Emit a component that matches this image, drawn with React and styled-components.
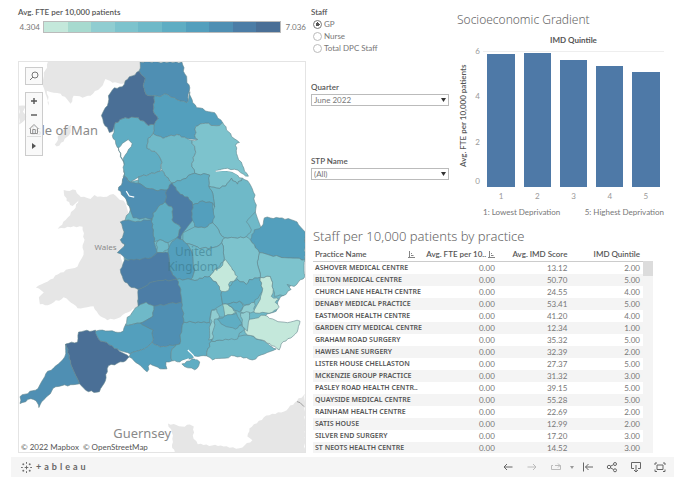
import React, { useState } from "react";
import styled, { createGlobalStyle } from "styled-components";

const GlobalStyle = createGlobalStyle`
  * {
    box-sizing: border-box;
  }

  body {
    margin: 0;
    background: #fff;
    color: #555;
    font-family: Lato, "Noto Sans", sans-serif;
    font-size: 8px;
    line-height: 12px;
  }

  button,
  input,
  select {
    margin: 0;
    font: inherit;
    color: inherit;
  }
`;

const Page = styled.div`
  padding: 0 6px 8px 11px;
`;

const Dashboard = styled.main`
  display: grid;
  grid-template-columns: minmax(0, 288fr) minmax(0, 363fr);
  column-gap: 5px;
  padding: 6px 0 4px 7px;
`;

const Label = styled.div`
  font-weight: 600;
`;

const Legend = styled.section`
  height: 55px;
`;

const LegendRow = styled.div`
  display: grid;
  grid-template-columns: 22px 1fr 22px;
  align-items: center;
  column-gap: 3px;
  margin-top: 3px;
  color: #777;
  text-align: right;
`;

const Ramp = styled.div`
  display: flex;
  height: 12px;
  border: 1px solid #bbb;
`;

const RampStep = styled.span`
  flex: 1;
  background: ${(props) => props.$color};
`;

const MapFrame = styled.section`
  position: relative;
  border: 1px solid #e4e4e4;

  > svg {
    display: block;
    width: 100%;
    height: auto;
    font-family: "Noto Sans", sans-serif;
  }
`;

const MapTools = styled.div`
  position: absolute;
  top: 5px;
  left: 6px;
  display: flex;
  flex-direction: column;
  gap: 7px;
`;

const ToolGroup = styled.div`
  display: flex;
  flex-direction: column;
  padding: 1px;
  border: 1px solid #ccc;
  background: rgba(248, 248, 248, 0.85);
`;

const ToolButton = styled.button`
  display: grid;
  place-items: center;
  width: 14px;
  height: ${(props) => (props.$tall ? "18px" : "14px")};
  padding: 0;
  border: 0;
  border-top: ${(props) => (props.$tall ? "1px solid #ddd" : "0")};
  background: none;
`;

const Attribution = styled.div`
  position: absolute;
  bottom: 0;
  left: 2px;
  display: flex;
  gap: 4px;
  line-height: 10px;

  a {
    color: #555;
    text-decoration: none;
  }
`;

const RightSide = styled.div`
  display: flex;
  flex-direction: column;
`;

const TopRow = styled.div`
  display: grid;
  grid-template-columns: minmax(0, 138fr) minmax(0, 218fr);
  column-gap: 7px;
  height: 222px;
`;

const Filters = styled.section`
  display: flex;
  flex-direction: column;
`;

const StaffFilter = styled.fieldset`
  height: 75px;
  margin: 0;
  padding: 0;
  border: 0;

  legend {
    padding: 0;
    font-weight: 600;
  }
`;

const Radio = styled.label`
  display: flex;
  align-items: center;
  gap: 2px;
  padding-left: 2px;
  color: #777;

  input {
    appearance: none;
    width: 9px;
    height: 9px;
    border: 1px solid #bbb;
    border-radius: 50%;
    background: #fff;
  }

  input:checked {
    border-color: #777;
    background: radial-gradient(circle, #555 0 2px, #fff 2px);
  }
`;

const SelectFilter = styled.div`
  display: flex;
  flex-direction: column;
  height: 74px;

  label {
    font-weight: 600;
  }
`;

const SelectBox = styled.div`
  position: relative;
  margin-top: 1px;

  select {
    display: block;
    appearance: none;
    width: 100%;
    height: 12px;
    padding: 0 12px 0 2px;
    border: 1px solid #bbb;
    border-radius: 0;
    background: #fff;
    color: #777;
    line-height: 10px;
  }

  svg {
    position: absolute;
    top: 4px;
    right: 3px;
    pointer-events: none;
  }
`;

const Title = styled.h2`
  margin: 0;
  color: #666;
  font-family: "Noto Sans", sans-serif;
  font-size: ${(props) => (props.$large ? "13px" : "12px")};
  font-weight: 300;
  line-height: 16px;
`;

const Gradient = styled.section`
  display: flex;
  flex-direction: column;
  padding: 6px 10px 0 1px;
`;

const ChartGrid = styled.div`
  display: grid;
  grid-template-columns: 12px 8px 1fr;
  column-gap: 3px;
`;

const ChartHeader = styled.div`
  grid-column: 3;
  height: 17px;
  padding-top: 6px;
  font-weight: 700;
  text-align: center;
`;

const AxisTitle = styled.div`
  grid-column: 1;
  writing-mode: vertical-rl;
  transform: rotate(180deg);
  font-weight: 600;
  text-align: center;
`;

const AxisY = styled.div`
  display: grid;
  grid-template-rows: repeat(3, 1fr) 6px;
  color: #999;
  text-align: right;

  span:last-child {
    align-self: end;
  }
`;

const Plot = styled.div`
  display: grid;
  grid-template-columns: repeat(5, 1fr);
  align-items: end;
  justify-items: center;
  height: 136px;
  margin-top: 6px;
  border-top: 1px solid #eee;
`;

const Bar = styled.div`
  width: 76%;
  background: #4e79a7;
`;

const AxisX = styled.div`
  grid-column: 3;
  display: grid;
  grid-template-columns: repeat(5, 1fr);
  padding-top: 3px;
  color: #999;
  text-align: center;
`;

const Notes = styled.div`
  display: flex;
  justify-content: space-between;
  padding: 4px 0 0 26px;
  color: #777;
`;

const Practices = styled.section`
  padding: 0 21px 0 2px;
`;

const TableWrap = styled.div`
  display: flex;
  height: 205px;
  margin-top: 4px;
  overflow: hidden;
`;

const Table = styled.table`
  flex: 1;
  width: 100%;
  height: 205px;
  table-layout: fixed;
  border-collapse: collapse;

  th,
  td {
    height: 12px;
    padding: 0 3px 0 0;
    text-align: right;
    white-space: nowrap;
    font-weight: 400;
  }

  th:first-child {
    padding: 0 0 0 2px;
    text-align: left;
  }

  tbody th {
    font-family: "Noto Sans", sans-serif;
    font-size: 7px;
    font-weight: 600;
  }

  thead th {
    height: 13px;
    border-bottom: 1px solid #ccc;
    font-weight: 600;
  }

  td {
    color: #777;
  }

  tbody tr:nth-child(even) {
    background: #f4f4f4;
  }
`;

const SortHead = styled.div`
  display: flex;
  align-items: center;
  justify-content: space-between;
  padding-left: ${(props) => (props.$indent ? "11px" : "0")};
`;

const ScrollTrack = styled.div`
  flex: none;
  width: 10px;
  margin-top: 13px;
  background: #f4f4f4;
`;

const ScrollThumb = styled.div`
  height: 15px;
  background: #dcdcdc;
`;

const Toolbar = styled.footer`
  display: flex;
  align-items: center;
  justify-content: space-between;
  height: 20px;
  padding: 0 2px 0 10px;
  background: #f5f5f5;
`;

const Logo = styled.a`
  display: flex;
  align-items: center;
  gap: 4px;
  color: #666;
  text-decoration: none;
`;

const Wordmark = styled.span`
  display: flex;
  gap: 3px;
  font-size: 9px;
  font-weight: 700;
`;

const Actions = styled.div`
  display: flex;
`;

const Action = styled.button`
  display: grid;
  place-items: center;
  width: ${(props) => (props.$narrow ? "8px" : "24px")};
  height: 20px;
  padding: 0;
  border: 0;
  background: none;
  color: ${(props) => (props.disabled ? "#bbb" : "#666")};
`;

const ramp = [
  "#c4e8db",
  "#a7dacf",
  "#90cdd1",
  "#7dc3cd",
  "#6fb9c8",
  "#5fadc3",
  "#539fbd",
  "#4f8fb3",
  "#4c7da6",
  "#4a6f96",
];

// land without data
const land = [
  "47,61 43,75 42,85 48,105 46,90 53,92 60,93 66,98 70,103 73,95 82,97 90,95 100,87 105,78 112,82 123,83 139,70 141,61",
  "54,144 59,134 65,128 71,124 70,132 63,141 56,146",
  "18,105 25,105 22,111 26,116 18,124",
  "63,190 75,190 81,198 72,206 66,201",
  "80,197 90,199 94,195 103,197 113,194 125,203 130,217 134,220 124,232 125,245 120,250 122,262 123,280 138,290 138,307 128,313 120,318 107,321 98,315 93,307 77,309 73,305 63,298 53,303 47,306 39,305 38,298 43,293 35,288 47,282 60,273 77,267 83,255 82,248 84,240 82,227 67,227 57,229 65,220 73,210",
  "306,395 298,402 285,413 267,417 250,430 248,438 253,442 240,450 227,448 198,446 193,437 194,428 190,426 182,428 168,425 173,437 172,447 175,454 306,454",
];

// care systems: shade in the ramp, outline
const regions = [
  [4, "118,147 124,165 124,182 138,180 152,190 172,183 196,165 240,178 256,212 262,230 280,230 306,240 302,275 280,300 277,312 262,318 262,342 240,350 215,350 190,350 160,345 135,325 140,290 125,270 124,222 130,210 122,190 125,165"],
  [7, "140,61 182,61 185,73 190,87 188,97 187,102 177,99 165,93 160,96 154,95 146,94 143,85 145,77 139,70"],
  [6, "154,95 160,96 165,93 177,99 187,102 190,91 193,102 197,107 215,112 223,122 220,125 203,123 196,126 195,135 198,139 187,138 177,134 163,138 153,133 154,124 158,118 153,110"],
  [5, "115,122 125,117 138,117 148,125 154,124 153,133 148,138 147,148 157,153 162,162 160,171 138,177 130,182 124,176 123,158 127,152 132,143 128,139 122,143 119,147 117,147 115,140 112,135"],
  [9, "139,70 125,80 122,86 114,87 108,95 107,105 101,115 103,122 107,127 109,132 112,131 115,122 125,117 138,117 148,125 154,124 158,118 153,110 154,95 146,94 143,85 145,77"],
  [4, "153,133 163,138 177,134 187,138 192,140 196,152 192,163 195,173 183,179 172,183 162,170 162,162 157,153 147,148 148,138"],
  [3, "196,126 203,123 220,125 223,122 232,136 240,142 236,145 237,153 243,165 249,176 244,174 235,169 228,168 216,171 229,171 243,178 238,184 232,178 226,186 217,188 209,186 210,175 195,173 192,163 196,152 192,140 198,139 195,135"],
  [4, "209,186 217,188 226,186 232,178 238,184 243,178 250,183 254,192 257,205 256,212 247,222 252,230 247,237 235,238 225,238 220,233 213,223 215,207 213,193"],
  [5, "172,183 183,179 195,173 210,175 209,186 213,193 215,207 213,203 203,201 193,205 188,197 180,194"],
  [5, "138,177 160,171 162,170 172,183 167,190 155,190 146,188 138,183"],
  [7, "124,176 130,182 138,183 146,188 155,190 167,190 165,202 160,205 153,213 152,219 133,218 130,208 125,198 118,190 122,182"],
  [8, "167,190 172,183 180,194 188,197 193,205 192,217 193,220 183,233 181,240 177,238 181,228 172,220 173,209 165,202"],
  [6, "193,205 203,201 213,203 215,217 213,223 205,228 195,227 192,217"],
  [5, "152,219 153,213 160,205 165,202 173,209 172,220 181,228 177,238 168,243 160,240 154,242 153,233"],
  [7, "120,222 128,220 135,222 152,219 153,233 154,242 157,253 148,259 127,260 117,253 120,250 125,245 120,240 124,232"],
  [4, "157,242 160,240 168,243 169,248 163,253 157,253"],
  [6, "168,253 169,248 172,242 177,238 183,240 187,244 193,256 195,270 191,280 177,280 170,270"],
  [8, "125,260 148,259 157,253 163,253 168,253 170,270 177,280 160,281 150,283 147,286 138,290 131,288 123,280 120,270"],
  [8, "138,290 147,286 150,283 160,281 177,280 181,290 182,303 170,304 154,307 146,303 138,307"],
  [4, "138,307 146,303 154,307 153,317 140,324 125,326 127,318"],
  [7, "154,307 170,304 182,303 184,323 182,330 180,345 176,346 160,348 152,343 153,331 140,324 153,317"],
  [6, "93,333 102,331 115,333 123,332 125,326 140,324 153,331 152,343 147,348 130,355 117,350 98,340"],
  [7, "65,345 70,362 79,385 70,386 55,388 47,397 43,401 38,409 35,402 30,400 19,405 19,398 37,390 45,375 55,367 64,358"],
  [9, "65,345 77,343 78,333 95,331 98,340 117,350 129,358 123,363 108,367 105,382 99,393 88,393 79,385 70,362"],
  [6, "129,358 130,355 147,348 152,343 160,348 176,346 172,350 172,362 166,363 167,370 160,370 150,365 147,373 138,365"],
  [5, "184,323 210,323 212,342 208,350 207,357 195,357 190,360 180,363 172,362 172,350 176,346 180,345 182,330"],
  [5, "182,365 192,360 200,363 199,367 195,371 188,369"],
  [4, "212,342 220,341 235,339 248,336 262,341 277,350 265,355 253,361 235,357 213,361 207,357 208,350"],
  [4, "215,318 224,318 235,325 243,327 245,330 240,334 238,340 220,341 212,342 213,330"],
  [0, "248,325 245,330 248,336 263,341 280,351 282,345 294,337 299,330 301,322 298,321 285,323 276,321 265,316 250,320"],
  [6, "251,240 255,230 262,227 265,218 283,218 298,222 306,232 306,260 280,257 260,253"],
  [3, "260,253 280,257 306,260 306,277 295,287 288,285 292,290 287,295 275,297 274,290 271,277 261,278 258,262"],
  [3, "225,238 235,238 247,237 251,240 260,253 258,262 261,278 250,280 247,285 238,280 233,270 224,262 224,250 222,243"],
  [4, "183,233 195,227 205,228 213,223 220,233 225,238 222,243 217,247 200,249 187,244 183,240"],
  [4, "187,244 200,249 217,247 222,243 224,250 224,262 215,270 210,277 205,277 195,281 191,280 195,270 193,256"],
  [5, "177,280 191,280 195,281 205,277 210,277 218,285 222,292 223,305 212,311 210,323 184,323 182,303 181,290"],
  [5, "229,287 238,280 247,285 250,280 261,278 263,292 255,303 245,306 240,302 228,305 223,305 222,292"],
  [0, "226,260 232,268 238,277 229,285 229,291 222,292 218,285 210,277 215,270 221,268"],
  [0, "253,312 261,300 263,292 261,278 271,277 274,290 272,297 280,300 276,303 280,308 273,313 260,314"],
  [2, "212,311 217,310 220,318 215,320 213,340 209,341 211,325"],
  [1, "223,305 228,305 237,313 232,316 225,317"],
  [5, "228,305 240,302 244,307 240,313 235,311"],
  [2, "244,307 255,303 255,312 248,314 241,313"],
  [5, "218,320 225,317 237,314 243,325 236,330 224,326"],
  [2, "241,314 250,313 250,320 248,332 243,327"],
];

// breaks each edge into short jogs; an edge gives the same jogs in both directions
function roughen(points) {
  const nodes = points.split(" ").map((p) => p.split(",").map(Number));
  const out = [];
  nodes.forEach((from, i) => {
    const to = nodes[(i + 1) % nodes.length];
    const flip = from[0] > to[0] || (from[0] === to[0] && from[1] > to[1]);
    const [a, b] = flip ? [to, from] : [from, to];
    const dx = b[0] - a[0];
    const dy = b[1] - a[1];
    const length = Math.hypot(dx, dy);
    const steps = length > 60 ? 1 : Math.max(1, Math.round(length / 3));
    const line = [a];
    for (let k = 1; k < steps; k++) {
      const seed = Math.sin(a[0] * 12.9 + a[1] * 78.2 + k * 37.7) * 43758;
      const shift = (seed - Math.floor(seed) - 0.5) * 2;
      line.push([
        a[0] + (dx * k) / steps - (dy / length) * shift,
        a[1] + (dy * k) / steps + (dx / length) * shift,
      ]);
    }
    line.push(b);
    if (flip) line.reverse();
    out.push(...line.slice(0, -1));
  });
  return out.map(([x, y]) => `${x.toFixed(1)},${y.toFixed(1)}`).join(" ");
}

const bars = [
  { quintile: 1, value: 5.92 },
  { quintile: 2, value: 5.95 },
  { quintile: 3, value: 5.66 },
  { quintile: 4, value: 5.37 },
  { quintile: 5, value: 5.1 },
];

const practices = [
  ["ASHOVER MEDICAL CENTRE", "13.12", "2.00"],
  ["BILTON MEDICAL CENTRE", "50.70", "5.00"],
  ["CHURCH LANE HEALTH CENTRE", "24.55", "4.00"],
  ["DENABY MEDICAL PRACTICE", "53.41", "5.00"],
  ["EASTMOOR HEALTH CENTRE", "41.20", "4.00"],
  ["GARDEN CITY MEDICAL CENTRE", "12.34", "1.00"],
  ["GRAHAM ROAD SURGERY", "35.32", "5.00"],
  ["HAWES LANE SURGERY", "32.39", "2.00"],
  ["LISTER HOUSE CHELLASTON", "27.37", "5.00"],
  ["MCKENZIE GROUP PRACTICE", "31.32", "3.00"],
  ["PASLEY ROAD HEALTH CENTR..", "39.15", "5.00"],
  ["QUAYSIDE MEDICAL CENTRE", "55.28", "5.00"],
  ["RAINHAM HEALTH CENTRE", "22.69", "2.00"],
  ["SATIS HOUSE", "12.99", "2.00"],
  ["SILVER END SURGERY", "17.20", "3.00"],
  ["ST NEOTS HEALTH CENTRE", "14.52", "3.00"],
];

function Icon({ size = 12, children }) {
  return (
    <svg
      width={size}
      height={size}
      viewBox="0 0 12 12"
      fill="none"
      stroke="currentColor"
      aria-hidden="true"
    >
      {children}
    </svg>
  );
}

function SortIcon() {
  return (
    <svg
      width="7"
      height="7"
      viewBox="0 0 7 7"
      fill="none"
      stroke="#777"
      strokeWidth="0.9"
    >
      <path d="M1.5 0v6M3 2.5h1M3 4.5h2.5M0 6.5h7" />
    </svg>
  );
}

function EnglandMap() {
  return (
    <svg viewBox="18 61 288 393" role="img" aria-label="Map of England">
      <g fill="#e6e6e6">
        {land.map((points) => (
          <polygon key={points} points={roughen(points)} />
        ))}
      </g>
      <g stroke="#64858c" strokeWidth="0.6" strokeLinejoin="round">
        {regions.map(([shade, points]) => (
          <polygon key={points} points={roughen(points)} fill={ramp[shade]} />
        ))}
      </g>
      <g fill="none" stroke="#fff" strokeWidth="1.2">
        <path d="M216 171l9-1 8 1 5 3 5 2M126 191l3 5 5 1M188 351l5 5 3 4 7-2M181 363l8-3" />
      </g>
      <path d="M298 403l3 1 4 4" fill="none" stroke="#888" strokeWidth="0.8" />
      <g fill="#8a8a8a">
        <text x="30" y="135" fontSize="13">
          Isle of Man
        </text>
        <text x="94" y="250" fontSize="8">
          Wales
        </text>
        <text x="113" y="440" fontSize="13">
          Guernsey
        </text>
      </g>
      <g fill="#34707f" fillOpacity="0.5" fontSize="12" textAnchor="middle">
        <text x="194" y="256">
          United
        </text>
        <text x="193" y="271">
          Kingdom
        </text>
      </g>
    </svg>
  );
}

function SelectField({ id, label, value }) {
  return (
    <SelectFilter>
      <label htmlFor={id}>{label}</label>
      <SelectBox>
        <select id={id} defaultValue={value}>
          <option>{value}</option>
        </select>
        <svg width="5" height="4" viewBox="0 0 5 4" fill="#333">
          <path d="M0 0h5L2.5 4z" />
        </svg>
      </SelectBox>
    </SelectFilter>
  );
}

function App() {
  const [staff, setStaff] = useState("GP");

  return (
    <Page>
      <GlobalStyle />
      <Dashboard>
        <div>
          <Legend>
            <Label>Avg. FTE per 10,000 patients</Label>
            <LegendRow>
              <span>4.304</span>
              <Ramp>
                {ramp.map((color) => (
                  <RampStep key={color} $color={color} />
                ))}
              </Ramp>
              <span>7.036</span>
            </LegendRow>
          </Legend>
          <MapFrame>
            <EnglandMap />
            <MapTools>
              <ToolGroup>
                <ToolButton aria-label="Search">
                  <Icon>
                    <circle cx="7" cy="5" r="3" stroke="#777" />
                    <path d="M5 7L2 10" stroke="#777" />
                  </Icon>
                </ToolButton>
              </ToolGroup>
              <ToolGroup>
                <ToolButton aria-label="Zoom in">
                  <Icon>
                    <path d="M3 6h6M6 3v6" strokeWidth="1.4" />
                  </Icon>
                </ToolButton>
                <ToolButton aria-label="Zoom out">
                  <Icon>
                    <path d="M3 6h6" strokeWidth="1.4" />
                  </Icon>
                </ToolButton>
                <ToolButton aria-label="Reset view">
                  <Icon>
                    <path
                      d="M1.5 6L6 1.5 10.5 6M2.5 5.5v5h7v-5M4.7 10.5V6.5h2.6v4"
                      stroke="#888"
                      strokeWidth="0.9"
                    />
                  </Icon>
                </ToolButton>
                <ToolButton $tall aria-label="More tools">
                  <Icon>
                    <path d="M4 3v6l4-3z" fill="#555" stroke="none" />
                  </Icon>
                </ToolButton>
              </ToolGroup>
            </MapTools>
            <Attribution>
              <a href="#mapbox">© 2022 Mapbox</a>
              <a href="#openstreetmap">© OpenStreetMap</a>
            </Attribution>
          </MapFrame>
        </div>

        <RightSide>
          <TopRow>
            <Filters>
              <StaffFilter>
                <legend>Staff</legend>
                {["GP", "Nurse", "Total DPC Staff"].map((name) => (
                  <Radio key={name}>
                    <input
                      type="radio"
                      name="staff"
                      checked={staff === name}
                      onChange={() => setStaff(name)}
                    />
                    {name}
                  </Radio>
                ))}
              </StaffFilter>
              <SelectField id="quarter" label="Quarter" value="June 2022" />
              <SelectField id="stp" label="STP Name" value="(All)" />
            </Filters>

            <Gradient>
              <Title>Socioeconomic Gradient</Title>
              <ChartGrid>
                <ChartHeader>IMD Quintile</ChartHeader>
                <AxisTitle>Avg. FTE per 10,000 patients</AxisTitle>
                <AxisY>
                  <span>6</span>
                  <span>4</span>
                  <span>2</span>
                  <span>0</span>
                </AxisY>
                <Plot>
                  {bars.map((bar) => (
                    <Bar
                      key={bar.quintile}
                      style={{ height: `${(bar.value / 6) * 100}%` }}
                    />
                  ))}
                </Plot>
                <AxisX>
                  {bars.map((bar) => (
                    <span key={bar.quintile}>{bar.quintile}</span>
                  ))}
                </AxisX>
              </ChartGrid>
              <Notes>
                <span>1: Lowest Deprivation</span>
                <span>5: Highest Deprivation</span>
              </Notes>
            </Gradient>
          </TopRow>

          <Practices>
            <Title $large>Staff per 10,000 patients by practice</Title>
            <TableWrap>
              <Table>
                <colgroup>
                  <col width="31%" />
                  <col width="25%" />
                  <col width="22%" />
                  <col width="22%" />
                </colgroup>
                <thead>
                  <tr>
                    <th scope="col">
                      <SortHead>
                        Practice Name <SortIcon />
                      </SortHead>
                    </th>
                    <th scope="col">
                      <SortHead $indent>
                        Avg. FTE per 10.. <SortIcon />
                      </SortHead>
                    </th>
                    <th scope="col">Avg. IMD Score</th>
                    <th scope="col">IMD Quintile</th>
                  </tr>
                </thead>
                <tbody>
                  {practices.map(([name, score, quintile]) => (
                    <tr key={name}>
                      <th scope="row">{name}</th>
                      <td>0.00</td>
                      <td>{score}</td>
                      <td>{quintile}</td>
                    </tr>
                  ))}
                </tbody>
              </Table>
              <ScrollTrack>
                <ScrollThumb />
              </ScrollTrack>
            </TableWrap>
          </Practices>
        </RightSide>
      </Dashboard>

      <Toolbar>
        <Logo href="#tableau" aria-label="tableau">
          <Icon size={11}>
            <path d="M6 4v4M4 6h4M6 0v2M6 10v2M0 6h2M10 6h2M2.5 1.5v2M1.5 2.5h2M9.5 1.5v2M8.5 2.5h2M2.5 8.5v2M1.5 9.5h2M9.5 8.5v2M8.5 9.5h2" />
          </Icon>
          <Wordmark>
            {["+", "a", "b", "l", "e", "a", "u"].map((letter, i) => (
              <span key={i}>{letter}</span>
            ))}
          </Wordmark>
        </Logo>
        <Actions>
          <Action aria-label="Undo">
            <Icon>
              <path d="M10.5 6H2M5 3L2 6l3 3" />
            </Icon>
          </Action>
          <Action aria-label="Redo" disabled>
            <Icon>
              <path d="M1.5 6H10M7 3l3 3-3 3" />
            </Icon>
          </Action>
          <Action aria-label="Replay" disabled>
            <Icon>
              <path d="M3 4.5H1.5v4h9v-4H5M8 2.5l2 2-2 2" />
            </Icon>
          </Action>
          <Action $narrow aria-label="Replay speed">
            <svg width="4" height="3" viewBox="0 0 4 3" fill="#999">
              <path d="M0 0h4L2 3z" />
            </svg>
          </Action>
          <Action aria-label="Revert">
            <Icon>
              <path d="M1.5 1.5v9M11 6H3.5M6.5 3l-3 3 3 3" />
            </Icon>
          </Action>
          <Action aria-label="Share">
            <Icon>
              <circle cx="3" cy="6" r="1.7" />
              <circle cx="9" cy="3" r="1.5" />
              <circle cx="9" cy="9.3" r="1.5" />
              <path d="M4.5 5.2l3-1.5M4.5 6.8l3 1.7" />
            </Icon>
          </Action>
          <Action aria-label="Download">
            <Icon>
              <path d="M4 7.5H1.5v-6h9v6H8M6 4v7M4 9l2 2 2-2" />
            </Icon>
          </Action>
          <Action aria-label="Full screen">
            <Icon>
              <path d="M3 4h6v4.5H3zM1 4V2h2M9 2h2v2M11 8.5v2H9M3 10.5H1v-2" />
            </Icon>
          </Action>
        </Actions>
      </Toolbar>
    </Page>
  );
}

export default App;
